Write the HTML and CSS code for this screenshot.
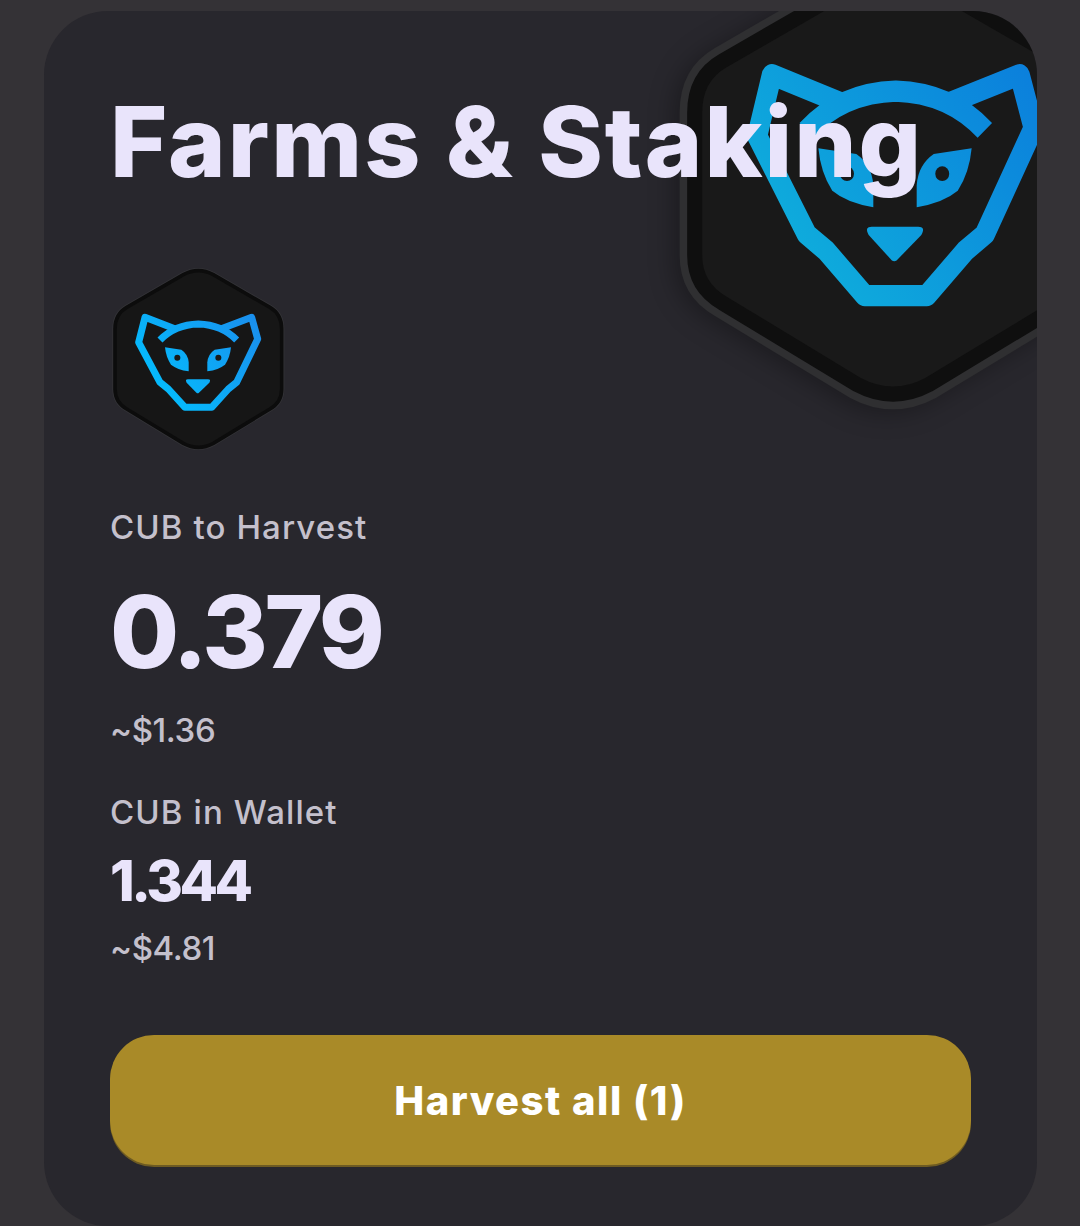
FILE: index.html
```html
<!DOCTYPE html>
<html lang="en">
<head>
  <meta charset="UTF-8" />
  <title>Farms &amp; Staking</title>
  <link rel="stylesheet" href="styles.css">
</head>
<body>

  <!-- shared logo parts -->
  <svg class="defs" width="0" height="0">
    <defs>
      <linearGradient id="faceSmall" gradientUnits="userSpaceOnUse" x1="120" y1="460" x2="470" y2="190">
        <stop offset="0" stop-color="#00c4ff" />
        <stop offset="1" stop-color="#1a8fee" />
      </linearGradient>
      <linearGradient id="faceBig" gradientUnits="userSpaceOnUse" x1="120" y1="460" x2="480" y2="190">
        <stop offset="0" stop-color="#0fb4dc" />
        <stop offset="1" stop-color="#0b7fdc" />
      </linearGradient>
      <symbol id="hex" viewBox="0 0 600 615" overflow="visible">
        <path d="M250 62 Q295 38 340 62 L510 160 Q545 180 545 225 V405 Q545 445 510 465 L340 568 Q295 592 250 568 L80 465 Q45 445 45 405 V225 Q45 180 80 160 Z" />
      </symbol>
      <symbol id="face" viewBox="107 182 374 286" preserveAspectRatio="none" overflow="visible">
        <g fill="none" stroke-linejoin="round" stroke-linecap="butt">
          <path d="M228 226 L135 190 L116 265 L180 385 L205 405 L255 460 H335 L385 405 L410 385 L473 255 L455 190 L360 226" />
          <path d="M180 258 Q225 212 295 210 Q365 212 410 258" />
        </g>
        <g stroke="none">
          <path d="M195 280 L244 287 Q264 300 266 325 V352 Q232 347 213 332 Q198 310 195 280 Z" />
          <path d="M393 280 L344 287 Q324 300 322 325 V352 Q356 347 375 332 Q390 310 393 280 Z" />
          <path d="M264 376 H324 Q334 376 328 386 L296 417 Q293 419 290 417 L260 386 Q254 376 264 376 Z" />
          <circle cx="232" cy="311" r="9" fill="#191919" />
          <circle cx="355" cy="311" r="9" fill="#191919" />
        </g>
      </symbol>
    </defs>
  </svg>

  <div class="card">
    <!-- big logo sits behind the title and is cut by the card -->
    <svg class="logo-big" viewBox="0 0 600 615">
      <use href="#hex" width="600" height="615" fill="#2f2f31" stroke="#2f2f31" stroke-width="38" />
      <use href="#hex" width="600" height="615" fill="#191919" stroke="#0f0f0f" stroke-width="19" />
      <use href="#face" x="115" y="169" width="365" height="295" fill="url(#faceBig)" stroke="url(#faceBig)" stroke-width="26" />
    </svg>

    <h1 class="title">Farms &amp; Staking</h1>

    <svg class="logo-small" viewBox="0 0 600 615">
      <use href="#hex" width="600" height="615" fill="#333337" stroke="#333337" stroke-width="16" />
      <use href="#hex" width="600" height="615" fill="#161616" stroke="#0c0c0c" stroke-width="11" />
      <use href="#face" x="107" y="182" width="374" height="286" fill="url(#faceSmall)" stroke="url(#faceSmall)" stroke-width="21" />
    </svg>

    <div class="stat stat-harvest">
      <div class="stat-label">CUB to Harvest</div>
      <div class="stat-value value-large">0.379</div>
      <div class="stat-usd">~$1.36</div>
    </div>

    <div class="stat stat-wallet">
      <div class="stat-label">CUB in Wallet</div>
      <div class="stat-value value-small">1.344</div>
      <div class="stat-usd">~$4.81</div>
    </div>

    <button class="harvest-btn">Harvest all (1)</button>
  </div>

</body>
</html>
```

FILE: styles.css
```css
html, body { margin: 0; background: #343236; }
body {
  width: 1080px;
  height: 1226px;
  padding: 11px 43px 0 44px;
  box-sizing: border-box;
  overflow: hidden;
  font-family: 'Inter', 'Noto Sans', sans-serif;
}
.defs { position: absolute; }

/* ---------- CARD ---------- */
.card {
  position: relative;
  height: 1215px;
  padding: 0 66px;
  box-sizing: border-box;
  display: flex;
  flex-direction: column;
  align-items: flex-start;
  background: #28272d;
  border-radius: 64px;
  overflow: hidden;
}
.logo-big {
  position: absolute;
  left: 615px;
  top: -77px;
  width: 476px;
  height: 488px;
  overflow: visible;
  filter: drop-shadow(-6px 4px 12px rgba(0, 0, 0, .3));
}
.title {
  position: relative;
  margin: 72px 0 0;
  font-size: 98px;
  line-height: 118px;
  font-weight: 800;
  letter-spacing: 2px;
  color: #e9e4fb;
  white-space: nowrap;
}
.logo-small {
  width: 200px;
  height: 205px;
  margin: 53px 0 0 -10px;
  overflow: visible;
}

/* ---------- STATS ---------- */
.stat { display: flex; flex-direction: column; }
.stat-harvest { margin-top: 47px; }
.stat-wallet { margin-top: 40px; }
.stat-label, .stat-usd { font-size: 33px; line-height: 42px; font-weight: 500; letter-spacing: 1.1px; color: #c4c0cc; }
.stat-usd { letter-spacing: -.4px; }
.stat-value { font-weight: 800; color: #e9e4fb; }
.value-large { font-size: 100px; line-height: 120px; margin: 24px 0 17px; letter-spacing: -3.5px; }
.value-small { font-size: 56px; line-height: 72px; margin: 12px 0 10px; letter-spacing: -3.5px; }

/* ---------- BUTTON ---------- */
.harvest-btn {
  width: 861px;
  height: 130px;
  margin-top: 66px;
  flex-shrink: 0;
  border: none;
  border-radius: 44px;
  background: #a98a28;
  box-shadow: 0 2px 0 #6e5b22;
  color: #fff;
  font-family: inherit;
  font-size: 40px;
  font-weight: 800;
  letter-spacing: 1.5px;
}
```
